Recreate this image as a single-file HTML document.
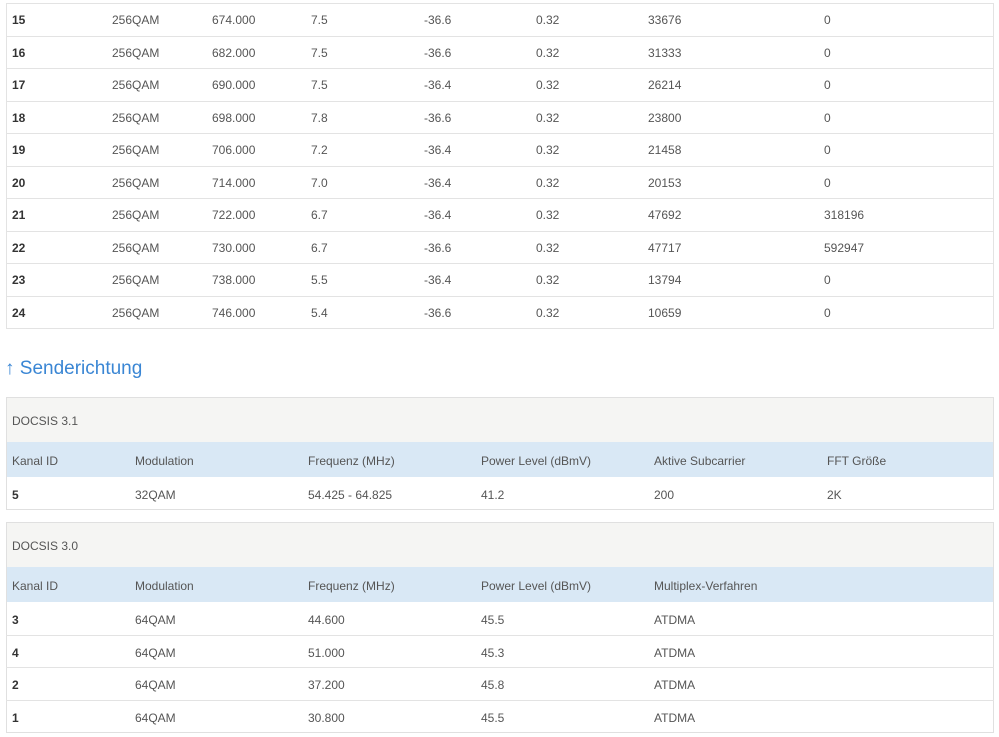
<!DOCTYPE html>
<html><head><meta charset="utf-8"><style>
body{margin:0;width:999px;height:737px;overflow:hidden;background:#fff;font-family:"Liberation Sans",sans-serif;font-size:12px;color:#555;position:relative}
.box{position:absolute;left:6px;width:988px;border:1px solid #e3e3e3;box-sizing:border-box}
.r{position:absolute;left:6px;width:988px;border-top:1px solid #e3e3e3;box-sizing:border-box}
.c{position:absolute;white-space:nowrap;z-index:5}
b{color:#333}
</style></head><body>
<div class="box" style="top:3px;height:326px"></div>
<div style="position:absolute;left:5px;top:358px;font-size:19px;color:#3a86d4">↑ Senderichtung</div>
<div class="box" style="top:397px;height:113px;border-color:#e0e0e0"></div>
<div style="position:absolute;left:7px;top:398px;width:986px;height:44px;background:#f5f5f3"></div>
<div style="position:absolute;left:7px;top:442px;width:986px;height:35px;background:#d9e8f5"></div>
<div class="c" style="left:12px;top:414px">DOCSIS 3.1</div>
<div class="box" style="top:522px;height:211px;border-color:#e0e0e0"></div>
<div style="position:absolute;left:7px;top:523px;width:986px;height:44px;background:#f5f5f3"></div>
<div style="position:absolute;left:7px;top:567px;width:986px;height:35px;background:#d9e8f5"></div>
<div class="c" style="left:12px;top:539px">DOCSIS 3.0</div>
<div id="t1"></div>
<script>
var d=[["15","674.000","7.5","-36.6","33676","0"],["16","682.000","7.5","-36.6","31333","0"],["17","690.000","7.5","-36.4","26214","0"],["18","698.000","7.8","-36.6","23800","0"],["19","706.000","7.2","-36.4","21458","0"],["20","714.000","7.0","-36.4","20153","0"],["21","722.000","6.7","-36.4","47692","318196"],["22","730.000","6.7","-36.6","47717","592947"],["23","738.000","5.5","-36.4","13794","0"],["24","746.000","5.4","-36.6","10659","0"]];
var h="";
d.forEach(function(r,i){var y=3+i*32.5;if(i>0)h+='<div class="r" style="top:'+y+'px"></div>';var ty=y+10;
var v=['<b>'+r[0]+'</b>','256QAM',r[1],r[2],r[3],'0.32',r[4],r[5]],xs=[12,112,212,311,424,536,648,824];
v.forEach(function(t,j){h+='<div class="c" style="left:'+xs[j]+'px;top:'+ty+'px">'+t+'</div>'});});
var xs2=[12,135,308,481,654,827];
function row(v,y){v.forEach(function(t,j){h+='<div class="c" style="left:'+xs2[j]+'px;top:'+y+'px">'+t+'</div>'})}
row(["Kanal ID","Modulation","Frequenz (MHz)","Power Level (dBmV)","Aktive Subcarrier","FFT Größe"],454);
row(["<b>5</b>","32QAM","54.425 - 64.825","41.2","200","2K"],488);
row(["Kanal ID","Modulation","Frequenz (MHz)","Power Level (dBmV)","Multiplex-Verfahren"],579);
[["3","44.600","45.5"],["4","51.000","45.3"],["2","37.200","45.8"],["1","30.800","45.5"]].forEach(function(r,i){var y=602+i*32.5;if(i>0)h+='<div class="r" style="top:'+y+'px"></div>';row(["<b>"+r[0]+"</b>","64QAM",r[1],r[2],"ATDMA"],y+11)});
document.getElementById('t1').innerHTML=h;
</script>
</body></html>
